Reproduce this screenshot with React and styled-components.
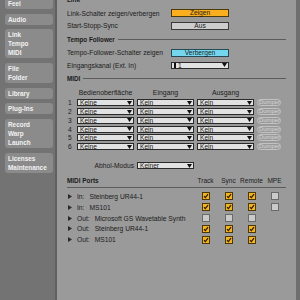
import React from 'react';
import styled, { createGlobalStyle } from 'styled-components';

const GlobalStyle = createGlobalStyle`
  html, body {
    margin: 0;
    padding: 0;
  }
  body {
    width: 300px;
    height: 300px;
    overflow: hidden;
    background: #9a9a9a;
    font-family: "Liberation Sans", Arial, sans-serif;
    color: #1a1a1a;
  }
`;

const Window = styled.div`
  display: flex;
  width: 300px;
  height: 300px;
  overflow: hidden;
`;

const Sidebar = styled.nav`
  width: 57px;
  flex: none;
  box-sizing: border-box;
  background: #737373;
  border-right: 2px solid #606060;
  padding: 0 2px 0 5px;
`;

const TabList = styled.div`
  display: flex;
  flex-direction: column;
  gap: 4.7px;
  margin-top: -11px;
`;

const Tab = styled.div`
  background: #8b8b8b;
  border-radius: 3px;
  padding: 1px 3px;
  line-height: 9px;
  font-size: 6.4px;
  font-weight: bold;
  color: #f2f2f2;
`;

const Main = styled.main`
  flex: 1;
  box-sizing: border-box;
  background: #9a9a9a;
  border-right: 4px solid #6f6f6f;
  padding: 0 10px;
  overflow: hidden;
`;

const Content = styled.div`
  margin-top: -7.75px;
  font-size: 6.7px;
`;

const SectionHeader = styled.div`
  height: 14.5px;
  display: flex;
  align-items: center;
  gap: 3px;
  font-size: 6.3px;
  font-weight: bold;

  &::after {
    content: '';
    flex: 1;
    height: 1px;
    background: #5c5c5c;
  }
`;

const Row = styled.div`
  height: 12.5px;
  display: flex;
  align-items: center;
`;

const Label = styled.div`
  width: 104px;
  white-space: nowrap;
`;

const ToggleButton = styled.div`
  width: 58px;
  height: 8px;
  box-sizing: border-box;
  border: 1px solid ${p => p.$edge || '#3a3a3a'};
  background: ${p => p.$bg};
  line-height: 6px;
  text-align: center;
  font-size: 6.6px;
`;

const Select = styled.div`
  width: ${p => p.$w || 57}px;
  height: ${p => p.$h || 7}px;
  box-sizing: border-box;
  border: 1px solid #2a2a2a;
  background: #e2e2e2;
  display: flex;
  align-items: center;
  gap: 2px;
  padding: 0 1.5px 0 2px;
  font-size: 6.6px;
  line-height: 5px;
  white-space: nowrap;
`;

const SelectText = styled.span`
  flex: 1;
`;

const ChannelMark = styled.span`
  width: 2px;
  height: 5px;
  background: #111;
`;

const MidiGrid = styled.div`
  display: grid;
  grid-template-columns: 7px 57px 57px 57px 24px;
  column-gap: 3px;
  row-gap: 1.8px;
  grid-auto-rows: 7px;
  align-items: center;
`;

const ColHead = styled.div`
  height: 13.5px;
  display: grid;
  grid-template-columns: 7px 57px 57px 57px 24px;
  column-gap: 3px;
  align-items: center;
  font-size: 6.9px;
  text-align: center;
`;

const Num = styled.div`
  padding-left: 1px;
  font-size: 6.6px;
  line-height: 7px;
`;

const Dumper = styled.div`
  height: 7px;
  box-sizing: border-box;
  border: 1px solid #c2c2c2;
  border-radius: 4px;
  color: #d6d6d6;
  font-size: 5.9px;
  line-height: 5px;
  padding-left: 1px;
  white-space: nowrap;
`;

const ModeRow = styled.div`
  margin-top: 12.25px;
  height: 7px;
  display: grid;
  grid-template-columns: 67px 57px;
  column-gap: 3px;
  align-items: center;
`;

const ModeLabel = styled.div`
  text-align: right;
  white-space: nowrap;
`;

const PortGrid = styled.div`
  display: grid;
  grid-template-columns: 1fr 23px 23px 23px 23px;
  align-items: center;
`;

const PortHead = styled(PortGrid)`
  margin-top: 5px;
  height: 13px;
  border-bottom: 1px solid #5c5c5c;
  margin-bottom: 2.6px;
`;

const PortTitle = styled.div`
  font-weight: bold;
  font-size: 6.4px;
`;

const PortColTitle = styled.div`
  text-align: center;
  font-size: 6.5px;
`;

const PortRow = styled(PortGrid)`
  height: 10.8px;
`;

const PortName = styled.div`
  display: flex;
  align-items: center;
  padding-left: 1px;
  white-space: nowrap;
`;

const Dir = styled.span`
  margin-left: 5px;
  margin-right: 5px;
`;

const Cell = styled.div`
  display: flex;
  justify-content: center;
`;

const Check = styled.div`
  width: 8px;
  height: 8px;
  box-sizing: border-box;
  border: 1px solid ${p => (p.$on ? '#4a3808' : '#6a6a6a')};
  background: ${p => (p.$on ? '#f5b320' : '#cacaca')};
  display: flex;
`;

const Arrow = () => (
  <svg width="5" height="4" viewBox="0 0 5 4">
    <polygon points="0,0 5,0 2.5,4" fill="#111" />
  </svg>
);

const Disclosure = () => (
  <svg width="4" height="5" viewBox="0 0 4 5">
    <polygon points="0,0 4,2.5 0,5" fill="#2a2a2a" />
  </svg>
);

const CheckBox = ({ on }) => (
  <Check $on={on}>
    {on && (
      <svg width="6" height="6" viewBox="0 0 6 6">
        <path d="M1 3.2 L2.4 4.6 L5 1.2" stroke="#2b1e00" strokeWidth="1.3" fill="none" />
      </svg>
    )}
  </Check>
);

const tabs = [
  ['Look', 'Feel'],
  ['Audio'],
  ['Link', 'Tempo', 'MIDI'],
  ['File', 'Folder'],
  ['Library'],
  ['Plug-Ins'],
  ['Record', 'Warp', 'Launch'],
  ['Licenses', 'Maintenance'],
];

const ports = [
  { dir: 'In:', name: 'Steinberg UR44-1', track: true, sync: true, remote: true, mpe: false },
  { dir: 'In:', name: 'MS101', track: true, sync: true, remote: true, mpe: false },
  { dir: 'Out:', name: 'Microsoft GS Wavetable Synth', track: false, sync: false, remote: false },
  { dir: 'Out:', name: 'Steinberg UR44-1', track: true, sync: true, remote: true },
  { dir: 'Out:', name: 'MS101', track: true, sync: true, remote: true },
];

const App = () => {
  return (
    <Window>
      <GlobalStyle />
      <Sidebar>
        <TabList>
          {tabs.map((lines, i) => (
            <Tab key={i}>
              {lines.map(l => (
                <div key={l}>{l}</div>
              ))}
            </Tab>
          ))}
        </TabList>
      </Sidebar>

      <Main>
        <Content>
          <SectionHeader>Link</SectionHeader>
          <Row>
            <Label>Link-Schalter zeigen/verbergen</Label>
            <ToggleButton $bg="#fbae1e" $edge="#4d3a0a">Zeigen</ToggleButton>
          </Row>
          <Row>
            <Label>Start-Stopp-Sync</Label>
            <ToggleButton $bg="#cdcdcd">Aus</ToggleButton>
          </Row>

          <SectionHeader>Tempo Follower</SectionHeader>
          <Row>
            <Label>Tempo-Follower-Schalter zeigen</Label>
            <ToggleButton $bg="#74d7ee" $edge="#234a55">Verbergen</ToggleButton>
          </Row>
          <Row>
            <Label>Eingangskanal (Ext. In)</Label>
            <Select $w={58}>
              <ChannelMark />
              <SelectText>1</SelectText>
              <Arrow />
            </Select>
          </Row>

          <SectionHeader>MIDI</SectionHeader>
          <ColHead>
            <div />
            <div>Bedienoberfläche</div>
            <div>Eingang</div>
            <div>Ausgang</div>
            <div />
          </ColHead>
          <MidiGrid>
            {[1, 2, 3, 4, 5, 6].map(n => (
              <React.Fragment key={n}>
                <Num>{n}</Num>
                <Select>
                  <SelectText>Keine</SelectText>
                  <Arrow />
                </Select>
                <Select>
                  <SelectText>Kein</SelectText>
                  <Arrow />
                </Select>
                <Select>
                  <SelectText>Kein</SelectText>
                  <Arrow />
                </Select>
                <Dumper>Dumper</Dumper>
              </React.Fragment>
            ))}
          </MidiGrid>

          <ModeRow>
            <ModeLabel>Abhol-Modus</ModeLabel>
            <Select>
              <SelectText>Keiner</SelectText>
              <Arrow />
            </Select>
          </ModeRow>

          <PortHead>
            <PortTitle>MIDI Ports</PortTitle>
            <PortColTitle>Track</PortColTitle>
            <PortColTitle>Sync</PortColTitle>
            <PortColTitle>Remote</PortColTitle>
            <PortColTitle>MPE</PortColTitle>
          </PortHead>

          {ports.map((p, i) => (
            <PortRow key={i}>
              <PortName>
                <Disclosure />
                <Dir>{p.dir}</Dir>
                {p.name}
              </PortName>
              <Cell><CheckBox on={p.track} /></Cell>
              <Cell><CheckBox on={p.sync} /></Cell>
              <Cell><CheckBox on={p.remote} /></Cell>
              <Cell>{p.mpe !== undefined && <CheckBox on={p.mpe} />}</Cell>
            </PortRow>
          ))}
        </Content>
      </Main>
    </Window>
  );
};

export default App;
